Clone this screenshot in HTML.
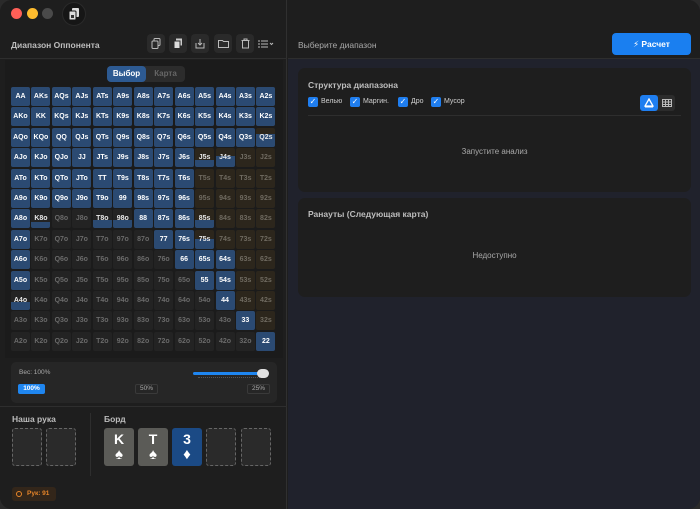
<!DOCTYPE html>
<html><head><meta charset="utf-8"><style>
*{box-sizing:border-box;margin:0;padding:0}
body{width:700px;height:509px;background:#2a2a2a;font-family:"Liberation Sans","DejaVu Sans",sans-serif;overflow:hidden;position:relative}
.win{position:absolute;left:0;top:0;width:700px;height:509px;border-radius:12px;overflow:hidden;background:#1e1e1e}
.abs{position:absolute}
.left{left:0;top:0;width:287px;height:509px;background:#1e1e1e;border-right:1px solid #303030}
.right{left:288px;top:0;width:412px;height:509px;background:#20222c}
.tb{width:18px;height:19px;background:#2a2a2a;border-radius:4px;top:34px;display:flex;align-items:center;justify-content:center}
.cell{position:absolute;width:19px;height:19px;border-radius:2px;font-size:7px;font-weight:bold;display:flex;align-items:center;justify-content:center;overflow:hidden}
.cell span{position:relative}
.cell i{position:absolute;left:0;right:0;bottom:0;background:#2b4a72}
.s{background:#2b4a72;color:#fff}
.us{background:#2c261c;color:#6f6a60}
.uo{background:#232323;color:#6a6a6a}
.pu{background:#2c261c;color:#e8e8e8}
.po{background:#232323;color:#e8e8e8}
.lbl{color:#bdbdbd;font-weight:bold;font-size:8.5px}
.dash{position:absolute;top:428px;width:30px;height:38px;border:1px dashed #666;border-radius:3px;background:#2a2a2a}
.card{position:absolute;top:428px;width:30px;height:38px;border-radius:3px;background:#5b5b57;color:#fff;text-align:center;font-weight:bold}
.card b{display:block;font-size:14px;margin-top:3px;line-height:16px}
.card em{display:block;font-style:normal;font-size:15px;line-height:16px}
.cb{position:absolute;top:97px;width:10px;height:10px;background:#1f7ef0;border-radius:2px;color:#fff;font-size:8px;line-height:10px;text-align:center}
.cbl{position:absolute;top:98px;font-size:7px;color:#cfcfcf}
.pc{position:absolute;background:#1e1e1e;border-radius:7px;left:298px;width:393px}
</style></head><body><div class="win">
<div class="abs left"></div>
<div class="abs right"></div>
<div class="abs" style="left:288px;top:0;width:412px;height:59px;background:#1e1e1e;border-bottom:1px solid #2e2e2e"></div>
<div class="abs" style="left:0;top:58px;width:287px;height:1px;background:#2e2e2e"></div>
<div class="abs" style="left:11px;top:8px;width:11px;height:11px;border-radius:50%;background:#fe5f57"></div>
<div class="abs" style="left:27px;top:8px;width:11px;height:11px;border-radius:50%;background:#febc2e"></div>
<div class="abs" style="left:42px;top:8px;width:11px;height:11px;border-radius:50%;background:#4a4a4a"></div>
<div class="abs" style="left:62px;top:2px;width:24px;height:24px;border-radius:50%;background:#161616;border:1px solid #2a2a2a"></div>
<svg class="abs" style="left:67px;top:7px" width="14" height="14" viewBox="0 0 14 14"><rect x="5" y="1" width="7" height="9" rx="1" fill="#ddd"/><rect x="2" y="4" width="7" height="9" rx="1" fill="#ddd" stroke="#161616"/><rect x="4" y="8" width="3" height="3" fill="#333"/></svg>
<div class="abs lbl" style="left:11px;top:40px;font-size:8.5px">Диапазон Оппонента</div>
<div class="abs tb" style="left:147px"><svg width="10" height="11"><rect x="3" y="0.5" width="6" height="7" rx="1" fill="none" stroke="#bbb"/><rect x="1" y="3" width="6" height="7.5" rx="1" fill="#2a2a2a" stroke="#bbb"/></svg></div>
<div class="abs tb" style="left:169px"><svg width="10" height="11"><rect x="3" y="0.5" width="6" height="7" fill="#ccc"/><rect x="1" y="3" width="6" height="7.5" fill="#ddd" stroke="#2a2a2a"/></svg></div>
<div class="abs tb" style="left:191px"><svg width="10" height="11"><path d="M1 5v5h8V5" fill="none" stroke="#bbb"/><path d="M5 1v6M3 5l2 2 2-2" fill="none" stroke="#bbb"/></svg></div>
<div class="abs tb" style="left:214px"><svg width="11" height="9"><path d="M.5 1.5h4l1 1h5v6h-10z" fill="none" stroke="#bbb"/></svg></div>
<div class="abs tb" style="left:236px"><svg width="9" height="11"><path d="M.5 2.5h8M3 2.5V1h3v1.5M1.5 3v7h6V3" fill="none" stroke="#bbb"/></svg></div>
<svg class="abs" style="left:258px;top:40px" width="16" height="8"><path d="M0 1h2M0 4h2M0 7h2M3 1h7M3 4h7M3 7h7" stroke="#bbb"/><path d="M12 3l1.5 1.5L15 3" stroke="#bbb" fill="none"/></svg>
<div class="abs" style="left:5px;top:60px;width:278px;height:298px;background:#1b1b1b"></div>
<div class="abs" style="left:107px;top:66px;width:78px;height:16px;background:#2c2c2c;border-radius:4px"></div>
<div class="abs" style="left:107px;top:66px;width:39px;height:16px;background:#2d5a92;border-radius:4px;color:#fff;font-size:8px;font-weight:bold;text-align:center;line-height:16px">Выбор</div>
<div class="abs" style="left:146px;top:66px;width:39px;height:16px;color:#666;font-size:8px;font-weight:bold;text-align:center;line-height:16px">Карта</div>
<div id="grid"></div>
<div class="abs" style="left:11px;top:362px;width:266px;height:41px;background:#262626;border-radius:5px"></div>
<div class="abs" style="left:19px;top:369px;font-size:6.5px;color:#aaa">Вес: 100%</div>
<div class="abs" style="left:18px;top:384px;width:27px;height:10px;background:#1f86f0;border-radius:2px;color:#fff;font-size:6.5px;font-weight:bold;text-align:center;line-height:10px">100%</div>
<div class="abs" style="left:135px;top:384px;width:23px;height:10px;border:1px solid #3a3a3a;border-radius:2px;color:#aaa;font-size:6.5px;text-align:center;line-height:8px">50%</div>
<div class="abs" style="left:247px;top:384px;width:23px;height:10px;border:1px solid #3a3a3a;border-radius:2px;color:#aaa;font-size:6.5px;text-align:center;line-height:8px">25%</div>
<div class="abs" style="left:193px;top:372px;width:70px;height:3px;background:#1f86f0;border-radius:2px"></div>
<div class="abs" style="left:198px;top:377px;width:66px;height:1px;border-top:1px dotted #555"></div>
<div class="abs" style="left:257px;top:369px;width:12px;height:9px;background:#e0e0e0;border-radius:5px"></div>
<div class="abs" style="left:0;top:406px;width:287px;height:1px;background:#2e2e2e"></div>
<div class="abs lbl" style="left:12px;top:414px">Наша рука</div>
<div class="dash" style="left:12px"></div><div class="dash" style="left:46px"></div>
<div class="abs" style="left:90px;top:413px;width:1px;height:63px;background:#2e2e2e"></div>
<div class="abs lbl" style="left:104px;top:414px">Борд</div>
<div class="card" style="left:104px"><b>K</b><em>♠</em></div>
<div class="card" style="left:138px"><b>T</b><em>♠</em></div>
<div class="card" style="left:172px;background:#1b4a85"><b>3</b><em>♦</em></div>
<div class="dash" style="left:206px"></div><div class="dash" style="left:241px"></div>
<div class="abs" style="left:12px;top:487px;width:44px;height:14px;background:#33261a;border-radius:3px"></div>
<div class="abs" style="left:16px;top:491px;width:6px;height:6px;border-radius:50%;border:1.5px solid #e8862a"></div>
<div class="abs" style="left:27px;top:490px;font-size:6.5px;font-weight:bold;color:#e8862a">Рук: 91</div>
<div class="abs" style="left:298px;top:40px;font-size:8.5px;color:#aaa">Выберите диапазон</div>
<div class="abs" style="left:612px;top:33px;width:79px;height:22px;background:#1a7ff0;border-radius:4px;color:#fff;font-size:8.5px;font-weight:bold;text-align:center;line-height:22px">⚡ Расчет</div>
<div class="pc" style="top:68px;height:124px"></div>
<div class="abs lbl" style="left:308px;top:80px">Структура диапазона</div>
<div class="cb" style="left:308px">✓</div><div class="cbl" style="left:321px">Велью</div>
<div class="cb" style="left:350px">✓</div><div class="cbl" style="left:363px">Маргин.</div>
<div class="cb" style="left:398px">✓</div><div class="cbl" style="left:411px">Дро</div>
<div class="cb" style="left:431px">✓</div><div class="cbl" style="left:444px">Мусор</div>
<div class="abs" style="left:640px;top:95px;width:35px;height:16px;background:#2c2c2c;border-radius:3px"></div>
<div class="abs" style="left:640px;top:95px;width:18px;height:16px;background:#1f7ef0;border-radius:3px"></div>
<svg class="abs" style="left:644px;top:98px" width="10" height="10"><path d="M5 1L9 8H1z" fill="none" stroke="#fff" stroke-width="1.3"/><path d="M1 9h8" stroke="#fff"/></svg>
<svg class="abs" style="left:662px;top:98px" width="10" height="10"><rect x=".5" y="1.5" width="9" height="7" fill="none" stroke="#bbb"/><path d="M.5 4h9M.5 6.5h9M3.5 1.5v7M6.5 1.5v7" stroke="#bbb"/></svg>
<div class="abs" style="left:308px;top:115px;width:373px;height:1px;background:#2e2e2e"></div>
<div class="abs" style="left:298px;top:147px;width:393px;text-align:center;font-size:8px;color:#aaa">Запустите анализ</div>
<div class="pc" style="top:198px;height:99px"></div>
<div class="abs lbl" style="left:308px;top:209px">Ранауты (Следующая карта)</div>
<div class="abs" style="left:298px;top:251px;width:393px;text-align:center;font-size:8px;color:#aaa">Недоступно</div>
</div>
<script>
var R="AKQJT98765432";
var sel={};
function S(a){a.split(" ").forEach(function(h){sel[h]=1})}
var p={Q2s:.7,J5s:.4,J4s:.6,K8o:.35,T8o:.45,"98o":.45,"85s":.45,"75s":.5,A4o:.4};
var rows=[13,13,12,9,9,9,1,1,1,1,0,0,0];
S("88 87s 86s 77 76s 66 65s 64s A5o 55 54s 44 33 22 A6o A7o A8o");
var h="";
for(var i=0;i<13;i++)for(var j=0;j<13;j++){
 var n=i==j?R[i]+R[j]:(j>i?R[i]+R[j]+"s":R[j]+R[i]+"o");
 var suited=j>i;
 var on=sel[n]||j<rows[i];
 var x=11+j*20.45,y=87+i*20.4,c,inner="";
 if(p[n]){c=suited?"pu":"po";inner='<i style="height:'+(p[n]*100)+'%"></i>';}
 else if(on)c="s";else c=suited?"us":"uo";
 h+='<div class="cell '+c+'" style="left:'+x+'px;top:'+y+'px">'+inner+'<span>'+n+'</span></div>';
}
document.getElementById("grid").innerHTML=h;
</script>
</body></html>
